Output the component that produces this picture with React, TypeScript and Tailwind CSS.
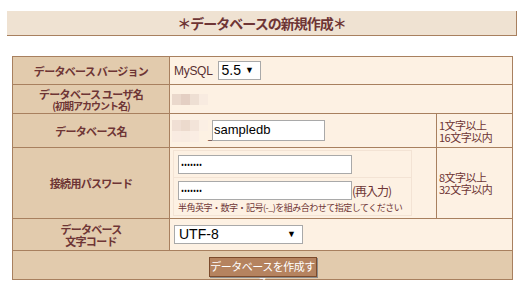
import React from 'react';

const jp = { fontFamily: '"Noto Sans CJK JP", "Liberation Sans", sans-serif' };
const arial = { fontFamily: '"Liberation Sans", Arial, sans-serif' };

// redacted (blurred) text patch
const Blur = ({ rows }: { rows: string[][] }) => (
    <div className="flex flex-col">
        {rows.map((row, i) => (
            <div key={i} className="flex">
                {row.map((c, j) => (
                    <div key={j} className="w-[9px] h-[11px]" style={{ backgroundColor: c }} />
                ))}
            </div>
        ))}
    </div>
);

const Label = ({ children }: { children: React.ReactNode }) => (
    <td className="bg-[#e2cbad] border border-[#a8805f] text-center font-bold text-[11px] leading-[12px] tracking-[-0.7px] text-[#6e3535]" style={jp}>
        {children}
    </td>
);

const Cell = ({ children, colSpan, className = '' }: { children?: React.ReactNode; colSpan?: number; className?: string }) => (
    <td colSpan={colSpan} className={`bg-[#fdf1e3] border border-[#a8805f] ${className}`}>
        {children}
    </td>
);

const Note = ({ a, b }: { a: string; b: string }) => (
    <Cell className="pl-[2px] align-middle">
        <div className="text-[11px] leading-[12px] tracking-[-0.5px] text-[#6e3535]" style={jp}>
            <div>{a}</div>
            <div>{b}</div>
        </div>
    </Cell>
);

export default function App() {
    return (
        <div className="w-[524px] h-[301px] bg-white pt-[11px]">
            <div className="ml-[7px] w-[510px] h-[25px] bg-[#efe2d2] border-b border-r border-[#a8805f] flex items-center justify-center">
                <span className="text-[14px] font-bold tracking-[-1px] text-[#6e3535]" style={jp}>
                    ＊データベースの新規作成＊
                </span>
            </div>

            <table className="ml-[12px] mt-[20px] w-[500px] border-collapse table-fixed">
                <colgroup>
                    <col className="w-[157px]" />
                    <col className="w-[267px]" />
                    <col className="w-[76px]" />
                </colgroup>
                <tbody>
                    <tr className="h-[28px]">
                        <Label>データベース&nbsp;バージョン</Label>
                        <Cell colSpan={2} className="pl-[4px]">
                            <div className="flex items-center gap-[5px]">
                                <span className="text-[12px] text-[#5a3030] tracking-[-0.3px]" style={arial}>MySQL</span>
                                <div className="h-[19px] w-[43px] border border-[#a9a9a9] bg-white flex items-center pl-[3px] text-[14px] text-black" style={arial}>
                                    5.5 <span className="ml-[4px] text-[9px]">▼</span>
                                </div>
                            </div>
                        </Cell>
                    </tr>
                    <tr className="h-[29px]">
                        <Label>
                            <div>データベース&nbsp;ユーザ名</div>
                            <div className="text-[10px] leading-[10px] mt-[1px] tracking-[-1px]">(初期アカウント名)</div>
                        </Label>
                        <Cell colSpan={2} className="pl-[2px]">
                            <Blur rows={[['#ead8cc', '#e4cfc3', '#eedfd3', '#f8ebe0']]} />
                        </Cell>
                    </tr>
                    <tr className="h-[34px]">
                        <Label>データベース名</Label>
                        <Cell className="pl-[2px]">
                            <div className="flex items-end">
                                <Blur rows={[['#f0dfd4', '#ecdacd', '#f3e4d9', '#fbefe4'], ['#f9ebe1', '#f8ebe0', '#faede3', '#fdf1e3']]} />
                                <span className="w-[4px] text-[10px] leading-[10px] mb-[2px] text-[#5a3030]">_</span>
                                <div className="h-[21px] w-[113px] border border-[#a9a9a9] bg-white flex items-center pl-[1px] text-[13px] text-black mb-[1px]" style={arial}>
                                    sampledb
                                </div>
                            </div>
                        </Cell>
                        <Note a="1文字以上" b="16文字以内" />
                    </tr>
                    <tr className="h-[71px]">
                        <Label>接続用パスワード</Label>
                        <Cell className="px-[3px] py-[2px]">
                            <div className="w-[239px] border border-[#f3e3d4]">
                                <div className="h-[27px] border-b border-[#f3e3d4] flex items-center pl-[4px]">
                                    <input type="password" readOnly value="abcdefg" className="h-[19px] w-[174px] border border-[#a9a9a9] bg-white pl-[2px] text-[8px] outline-none" />
                                </div>
                                <div className="pl-[4px] pt-[3px] pb-[2px]">
                                    <div className="flex items-center">
                                        <input type="password" readOnly value="abcdefg" className="h-[19px] w-[174px] border border-[#a9a9a9] bg-white pl-[2px] text-[8px] outline-none" />
                                        <span className="text-[12px] tracking-[-1px] text-[#6e3535]" style={jp}>(再入力)</span>
                                    </div>
                                    <div className="text-[9px] leading-[11px] mt-[2px] tracking-[-0.5px] text-[#6e3535] whitespace-nowrap" style={jp}>
                                        半角英字・数字・記号(-_)を組み合わせて指定してください
                                    </div>
                                </div>
                            </div>
                        </Cell>
                        <Note a="8文字以上" b="32文字以内" />
                    </tr>
                    <tr className="h-[32px]">
                        <Label>
                            <div>データベース</div>
                            <div>文字コード</div>
                        </Label>
                        <Cell colSpan={2} className="pl-[4px]">
                            <div className="h-[19px] w-[129px] border border-[#a9a9a9] bg-white flex items-center justify-between pl-[4px] pr-[6px] text-[14px] text-black" style={arial}>
                                <span>UTF-8</span>
                                <span className="text-[9px]">▼</span>
                            </div>
                        </Cell>
                    </tr>
                    <tr className="h-[29px]">
                        <td colSpan={3} className="bg-[#e2cbad] border border-[#a8805f] text-center">
                            <button className="h-[20px] w-[108px] bg-[#b5835f] border border-[#7c4b2c] text-white text-[11px] tracking-[-0.5px] shadow-[1px_1px_0_#8c8c8c] align-middle" style={jp}>
                                データベースを作成する
                            </button>
                        </td>
                    </tr>
                </tbody>
            </table>
        </div>
    );
}
